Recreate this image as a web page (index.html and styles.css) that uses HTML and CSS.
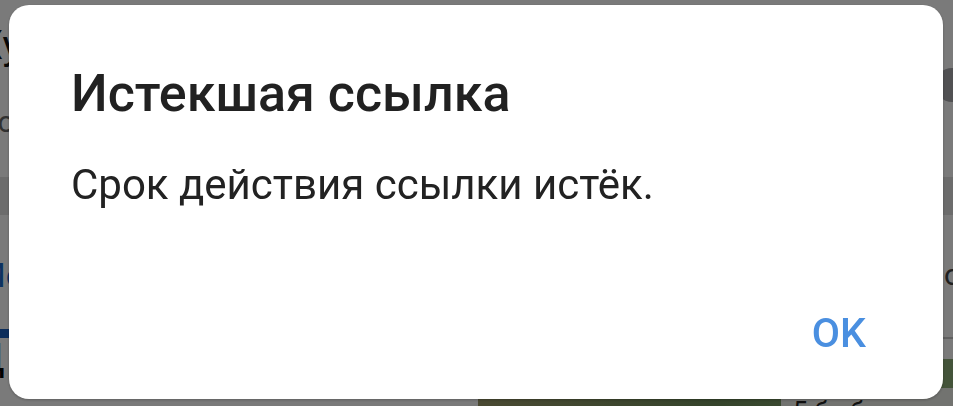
FILE: index.html
```html
<!DOCTYPE html>
<html lang="ru">
<head>
<meta charset="utf-8">
<title>Истекшая ссылка</title>
<link rel="stylesheet" href="styles.css">
</head>
<body>
<div class="page">
  <header class="top">
    <div class="top-text">
      <div class="heading">Ху</div>
      <div class="sub">Со</div>
    </div>
    <div class="avatar"></div>
  </header>
  <div class="band"></div>
  <div class="row">
    <span class="link">Мо</span>
    <span class="meta">о</span>
  </div>
  <div class="lower">
    <div class="lower-left">
      <div class="tab-bar"></div>
      <div class="lower-title">Д</div>
    </div>
    <div class="lower-right">
      <div class="rule"></div>
      <div class="photo"><span class="caption">5 б обзор</span></div>
    </div>
  </div>
</div>
<div class="scrim"></div>
<div class="dialog" role="dialog">
  <h2 class="dialog-title">Истекшая ссылка</h2>
  <p class="dialog-text">Срок действия ссылки истёк.</p>
  <div class="dialog-actions">
    <button class="btn-ok">OK</button>
  </div>
</div>
</body>
</html>
```

FILE: styles.css
```css
* { box-sizing: border-box; }
html, body {
  margin: 0;
  padding: 0;
  width: 953px;
  height: 406px;
  overflow: hidden;
  font-family: Roboto, "Noto Sans", "Liberation Sans", sans-serif;
  background: #fff;
}
.page {
  width: 953px;
  height: 406px;
  overflow: hidden;
}
.top {
  height: 177px;
  display: flex;
  justify-content: space-between;
  padding: 22px 0 0 0;
}
.top-text {
  margin-left: -22px;
}
.heading {
  font-size: 40px;
  line-height: 48px;
  color: #111;
}
.sub {
  margin-top: 34px;
  font-size: 30px;
  line-height: 36px;
  color: #666;
}
.avatar {
  width: 34px;
  height: 34px;
  border-radius: 50%;
  background: #a9a9ad;
  margin-top: 46px;
  margin-right: -16px;
}
.band {
  height: 38px;
  background: #e2e2e2;
}
.row {
  height: 114px;
  display: flex;
  justify-content: space-between;
  align-items: flex-start;
  padding-top: 40px;
}
.link {
  font-size: 34px;
  line-height: 40px;
  color: #1a66c8;
  margin-left: -24px;
}
.meta {
  font-size: 30px;
  line-height: 36px;
  color: #444;
  margin-top: 2px;
  margin-right: -8px;
}
.lower {
  display: grid;
  grid-template-columns: 478px 1fr;
  height: 77px;
}
.lower-left {
  display: flex;
  flex-direction: column;
}
.tab-bar {
  height: 9px;
  background: #1a5fbf;
}
.lower-title {
  font-size: 38px;
  line-height: 40px;
  color: #000;
  margin-left: -24px;
}
.lower-right {
  display: flex;
  flex-direction: column;
}
.rule {
  height: 2px;
  margin-top: 8px;
  background: #c8c8c8;
}
.photo {
  flex: 1;
  margin-top: 20px;
  background: linear-gradient(90deg, #9b9a6a 0%, #6f8e5a 50%, #8fb07a 100%);
  display: flex;
  justify-content: flex-end;
  align-items: flex-end;
}
.caption {
  background: #eef0ea;
  font-size: 26px;
  line-height: 26px;
  color: #222;
  padding: 10px 20px 0 12px;
  margin-bottom: -18px;
  width: 172px;
}
.scrim {
  position: fixed;
  inset: 0;
  background: rgba(0, 0, 0, 0.52);
}
.dialog {
  position: fixed;
  left: 9px;
  top: 5px;
  width: 934px;
  height: 394px;
  background: #fff;
  border-radius: 20px;
  box-shadow: 0 1px 3px rgba(0, 0, 0, 0.25);
  display: flex;
  flex-direction: column;
  padding: 59px 62px 0 62px;
}
.dialog-title {
  margin: 0;
  font-size: 52px;
  line-height: 60px;
  font-weight: 500;
  color: #212121;
}
.dialog-text {
  margin: 36px 0 0 0;
  font-size: 42px;
  line-height: 50px;
  font-weight: 400;
  color: #222;
}
.dialog-actions {
  margin-top: 99px;
  display: flex;
  justify-content: flex-end;
  margin-right: 15px;
}
.btn-ok {
  border: 0;
  background: transparent;
  padding: 0;
  font-family: inherit;
  font-size: 41px;
  line-height: 48px;
  font-weight: 500;
  color: #4a8fe0;
}
```
